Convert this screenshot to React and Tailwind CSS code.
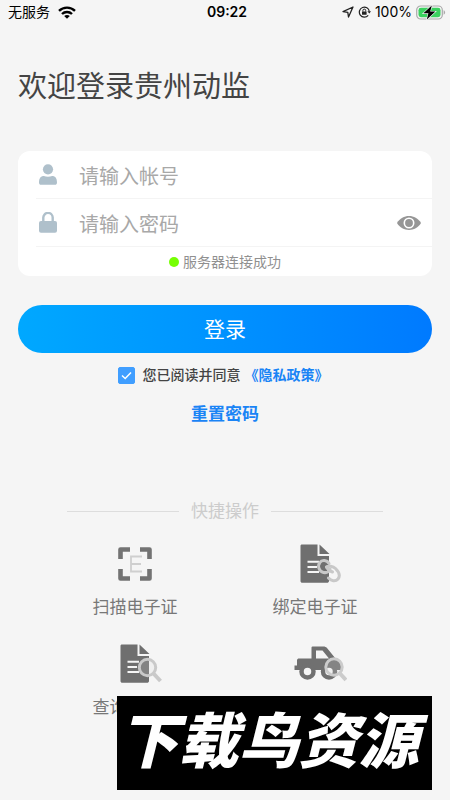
import { useState } from 'react'

// Ikon status bar
function WifiIcon() {
  return (
    <svg viewBox="0 0 18 13" className="w-[18px] h-[13px]" fill="none" stroke="#000" strokeWidth="2.4">
      <path d="M1 4.8C5.400 0.500 12.600 0.500 17 4.800" />
      <path d="M4 8C6.800 5.300 11.200 5.300 14 8" />
      <path d="M9 12.800L6.200 10C7.700 8.700 10.300 8.700 11.800 10Z" fill="#000" stroke="none" />
    </svg>
  )
}

function LocationIcon() {
  return (
    <svg viewBox="0 0 12 12" className="w-3 h-3" fill="none" stroke="#222" strokeWidth="1.3" strokeLinejoin="round">
      <path d="M11 1L1 5.600L5.800 6.300L6.500 11Z" />
    </svg>
  )
}

function RotationLockIcon() {
  return (
    <svg viewBox="0 0 13 12" className="w-[13px] h-3" fill="none" stroke="#222" strokeWidth="1.2">
      <path d="M10.200 9.300A5 5 0 1 1 11.300 5.500" />
      <path d="M9.400 5.200H13L11.300 7.600Z" fill="#222" stroke="none" />
      <rect x="4" y="5.400" width="4.600" height="3.400" rx="0.500" fill="#222" stroke="none" />
      <path d="M4.900 5.600V4.500A1.400 1.400 0 0 1 7.700 4.500V5.600" strokeWidth="1" />
    </svg>
  )
}

function BatteryIcon() {
  return (
    <svg viewBox="0 0 30 15" className="w-[30px] h-[15px]">
      <rect x="0.700" y="1" width="25.600" height="13" rx="4" fill="#f5f5f5" stroke="#aaa" strokeWidth="1.2" />
      <path d="M27.600 5.300C29.600 6 29.600 9 27.600 9.700Z" fill="#aaa" />
      <rect x="2.500" y="2.800" width="22" height="9.400" rx="2.400" fill="#3bd15f" />
      <path d="M15.800 0.500L7.400 8.300H12.400L10.800 14.500L19.400 6.600H14.200Z" fill="#000" stroke="#f5f5f5" strokeWidth="1.200" paintOrder="stroke" />
    </svg>
  )
}

// Ikon form
function UserIcon() {
  return (
    <svg viewBox="0 0 18 21" className="w-[18px] h-[21px]" fill="#afc0cb">
      <circle cx="9" cy="5.300" r="5.100" />
      <path d="M0 18.500C0 14 2 12 4.800 12C7.500 13 10.500 13 13.200 12C16 12 18 14 18 18.500C18 20 17.200 20.800 16 20.800H2C0.800 20.800 0 20 0 18.500Z" />
    </svg>
  )
}

function LockIcon() {
  return (
    <svg viewBox="0 0 18 21" className="w-[18px] h-[21px]">
      <path d="M4.300 10V5.600A4.700 4.700 0 0 1 13.700 5.600V10" fill="none" stroke="#afc0cb" strokeWidth="2.400" />
      <rect y="9" width="18" height="11.800" rx="2" fill="#afc0cb" />
    </svg>
  )
}

function EyeIcon() {
  return (
    <svg viewBox="0 0 24 16" className="w-6 h-4">
      <path d="M0 8C5.500 -1.300 18.500 -1.300 24 8C18.500 17.300 5.500 17.300 0 8Z" fill="#969696" />
      <circle cx="12" cy="8" r="4.700" fill="#969696" stroke="#fff" strokeWidth="1.600" />
    </svg>
  )
}

// Ikon menu cepat
function ScanIcon() {
  return (
    <svg viewBox="0 0 40 40" className="w-10 h-10" fill="none">
      <path d="M5.500 15V5.500H15M25 5.500H34.500V15M34.500 25V34.500H25M15 34.500H5.500V25" stroke="#737373" strokeWidth="4.600" strokeLinejoin="round" />
      <path d="M27 12.500H16V27.500H27M16 20H26" stroke="#cfcfcf" strokeWidth="1.800" />
    </svg>
  )
}

function DocShape() {
  return (
    <>
      <path d="M7 0.500H22.500V12H34V37C34 38.200 33.200 38.800 32 38.800H7.500C6.200 38.800 5.500 38.200 5.500 37V2C5.500 1 6 0.500 7 0.500Z" fill="#6f6f6f" />
      <path d="M24.500 0.500L34.500 10H24.500Z" fill="#6f6f6f" />
      <path d="M12.500 17.700H24M12.500 22.900H22M12.500 28.100H24" stroke="#f5f5f5" strokeWidth="2" />
    </>
  )
}

function BindIcon() {
  return (
    <svg viewBox="-8 0 56 40" className="w-14 h-10" fill="none">
      <DocShape />
      <g stroke="#c8c8c8" strokeWidth="3" strokeLinecap="round">
        <path d="M34 19.500C32 16 27 15.500 24.800 18.500C22.300 22 24 27.500 28.500 28.500C31.500 29 34 27.500 35 25" />
        <path d="M31.500 23C33.500 21.500 38 22 40.500 24.500C44.500 28.500 45 32.500 43 35C40.500 38 36 37 33.500 34" />
        <path d="M31.500 23C33 26 35 27 37.500 28" />
      </g>
    </svg>
  )
}

function QueryIcon() {
  return (
    <svg viewBox="-8 0 56 40" className="w-14 h-10" fill="none">
      <DocShape />
      <circle cx="32.500" cy="23.500" r="8.200" fill="#d8d8d8" fillOpacity="0.200" stroke="#c9c9c9" strokeWidth="3" />
      <path d="M38.500 29.500L45.500 37" stroke="#c9c9c9" strokeWidth="4" />
    </svg>
  )
}

function TruckIcon() {
  return (
    <svg viewBox="-9 0 64 40" className="w-16 h-10" fill="none">
      <path
        fillRule="evenodd"
        d="M20.500 2.500H31.500C33 2.500 34 3 35 4L43.500 14.500C48 15 49 18 49 22V26H2.500V21.500H5V16.500C5 15 6 14.500 7 14.500H19.500V4.500C19.500 3.200 19.500 2.500 20.500 2.500ZM24 6.500V14.500H37L30.500 6.500Z"
        fill="#707070"
      />
      <circle cx="15.500" cy="27.500" r="6" fill="#f5f5f5" stroke="#707070" strokeWidth="4.500" />
      <circle cx="37" cy="27.500" r="6" fill="#f5f5f5" stroke="#707070" strokeWidth="4.500" />
      <circle cx="42" cy="23" r="8.200" fill="#d8d8d8" fillOpacity="0.200" stroke="#cbcbcb" strokeWidth="3" />
      <path d="M48 29.500L54 36" stroke="#cbcbcb" strokeWidth="4" />
    </svg>
  )
}

// Daftar menu cepat
const quickActions = [
  { name: '扫描电子证', icon: ScanIcon },
  { name: '绑定电子证', icon: BindIcon },
  { name: '查询电子证', icon: QueryIcon },
  { name: '', icon: TruckIcon },
]

export default function App() {
  const [account, setAccount] = useState('')
  const [password, setPassword] = useState('')
  const [showPassword, setShowPassword] = useState(false)
  const [agreed, setAgreed] = useState(true)

  return (
    <div className="relative min-h-screen bg-[#f5f5f5] pb-4 font-['Liberation_Sans','Noto_Sans_CJK_SC',sans-serif] text-[#444]">
      <header className="grid grid-cols-3 items-center h-6 pl-2 pr-1 text-sm text-black font-['Inter','Noto_Sans_CJK_SC',sans-serif]">
        <div className="flex items-center gap-2 whitespace-nowrap">
          无服务
          <WifiIcon />
        </div>
        <div className="text-center font-semibold">09:22</div>
        <div className="flex items-center justify-end gap-1 whitespace-nowrap">
          <LocationIcon />
          <RotationLockIcon />
          <span>100%</span>
          <BatteryIcon />
        </div>
      </header>

      <main className="px-[18px]">
        <h1 className="mt-[43px] text-[29px] leading-10 whitespace-nowrap">欢迎登录贵州动监</h1>

        <form onSubmit={(e) => e.preventDefault()}>
          <div className="mt-11 rounded-xl bg-white overflow-hidden">
            <label className="flex items-center gap-[22px] h-12 ml-[18px] pl-[3px] border-b border-[#f4f4f4]">
              <UserIcon />
              <input
                type="text"
                aria-label="帐号"
                placeholder="请输入帐号"
                value={account}
                onChange={(e) => setAccount(e.target.value)}
                className="flex-1 min-w-0 pt-1 text-xl outline-none placeholder:text-[#a8a8a8]"
              />
            </label>
            <div className="flex items-center gap-[22px] h-12 ml-[18px] pl-[3px] pr-[11px] border-b border-[#f4f4f4]">
              <LockIcon />
              <input
                type={showPassword ? 'text' : 'password'}
                aria-label="密码"
                placeholder="请输入密码"
                value={password}
                onChange={(e) => setPassword(e.target.value)}
                className="flex-1 min-w-0 pt-1 text-xl outline-none placeholder:text-[#a8a8a8]"
              />
              <button type="button" aria-label="显示密码" onClick={() => setShowPassword(!showPassword)}>
                <EyeIcon />
              </button>
            </div>
            <p className="flex items-center justify-center gap-1 h-[29px] text-sm text-[#909090]">
              <span className="w-[10px] h-[10px] rounded-full bg-[#76ff03]" />
              服务器连接成功
            </p>
          </div>

          <button
            type="submit"
            className="block w-full h-12 mt-[29px] pt-0.5 rounded-full bg-linear-to-r from-[#00a8ff] to-[#007aff] text-[21px] text-white"
          >
            登录
          </button>

          <div className="flex items-center justify-center gap-1 mt-3 h-5 pr-1 text-sm font-medium whitespace-nowrap">
            <label className="flex items-center gap-2">
              <span className="grid">
                <input
                  type="checkbox"
                  checked={agreed}
                  onChange={(e) => setAgreed(e.target.checked)}
                  className="col-start-1 row-start-1 appearance-none w-[17px] h-[17px] rounded-xs border border-[#409eff] checked:bg-[#409eff]"
                />
                {agreed && (
                  <svg viewBox="0 0 17 17" className="col-start-1 row-start-1 w-[17px] h-[17px] pointer-events-none" fill="none" stroke="#fff" strokeWidth="1.500">
                    <path d="M4 8.500L7.200 11.500L13 5.500" />
                  </svg>
                )}
              </span>
              您已阅读并同意
            </label>
            <a href="#privacy" className="font-bold text-[#1a84f5]">《隐私政策》</a>
          </div>
        </form>

        <div className="mt-[18px] text-center leading-6">
          <a href="#reset" className="text-[17px] font-bold text-[#1a84f5]">重置密码</a>
        </div>

        <div className="flex items-center gap-3 mt-[72px] mx-[49px] h-6 text-[17px] text-[#ccc]">
          <span className="flex-1 h-px bg-[#ddd]" />
          <span className="pt-0.5">快捷操作</span>
          <span className="flex-1 h-px bg-[#ddd]" />
        </div>

        <div className="grid grid-cols-2 gap-y-3 mt-[21px] mx-[27px]">
          {quickActions.map((a, i) => (
            <button
              key={i}
              type="button"
              aria-label={a.name || '车辆查询'}
              className="flex flex-col items-center gap-[11px] h-[88px] text-[17px] text-[#777] whitespace-nowrap"
            >
              <a.icon />
              {a.name}
            </button>
          ))}
        </div>
      </main>

      {/* Watermark di atas menu */}
      <div className="absolute right-[18px] bottom-[10px] flex items-center justify-center w-[315px] h-[94px] pr-3 bg-black text-[60px] leading-none font-black italic text-white whitespace-nowrap">
        下载鸟资源
      </div>
    </div>
  )
}
